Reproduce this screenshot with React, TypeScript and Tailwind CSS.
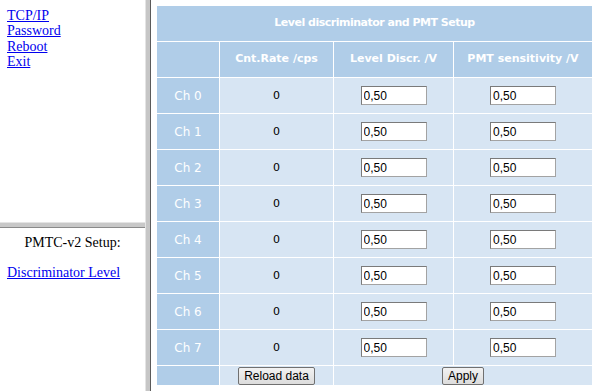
import React from 'react';

const channels = [0, 1, 2, 3, 4, 5, 6, 7];

const serif = { fontFamily: '"Liberation Serif", "Times New Roman", serif' };
const arial = { fontFamily: '"Liberation Sans", Arial, sans-serif' };

const App: React.FC = () => {
  return (
    <div className="flex w-[600px] h-[391px] bg-white overflow-hidden">
      {/* left frames */}
      <div className="flex flex-col w-[145px] shrink-0" style={serif}>
        <div className="h-[222px] pl-[7px] pt-[8px] text-[14px] leading-[15.4px] flex flex-col items-start">
          <a href="#" className="text-[#0000ee] underline">TCP/IP</a>
          <a href="#" className="text-[#0000ee] underline">Password</a>
          <a href="#" className="text-[#0000ee] underline">Reboot</a>
          <a href="#" className="text-[#0000ee] underline">Exit</a>
        </div>
        <div className="h-[6px] border-t border-[#e4e4e4] border-b border-b-[#8a8a8a] bg-[#c8c8c8]"></div>
        <div className="flex-1 pl-[7px] pt-[7px] text-[14px] leading-[15px]">
          <p className="text-center text-black pr-[7px]">PMTC-v2 Setup:</p>
          <p className="mt-[15px]">
            <a href="#" className="text-[#0000ee] underline">Discriminator Level</a>
          </p>
        </div>
      </div>
      <div className="w-[6px] shrink-0 border-l border-[#e4e4e4] border-r border-r-[#5a5a5a] bg-[#c6c6c6]"></div>

      {/* right frame */}
      <div className="flex-1 pl-[5px] pt-[5px]" style={{ fontFamily: '"DejaVu Sans", Verdana, sans-serif' }}>
        <table className="border-separate border-spacing-[1px] w-[437px] table-fixed">
          <colgroup>
            <col className="w-[62px]" />
            <col className="w-[113px]" />
            <col className="w-[119px]" />
            <col className="w-[138px]" />
          </colgroup>
          <thead>
            <tr>
              <th colSpan={4} className="h-[35px] bg-[#b0cde8] text-white text-[11px] tracking-[-0.5px] font-bold text-center p-0">
                Level discriminator and PMT Setup
              </th>
            </tr>
            <tr>
              <th className="h-[35px] bg-[#b0cde8] p-0"></th>
              <th className="bg-[#b0cde8] text-white text-[11px] font-bold p-0">Cnt.Rate /cps</th>
              <th className="bg-[#b0cde8] text-white text-[11px] font-bold p-0">Level Discr. /V</th>
              <th className="bg-[#b0cde8] text-white text-[11px] font-bold p-0">PMT sensitivity /V</th>
            </tr>
          </thead>
          <tbody>
            {channels.map((ch) => (
              <tr key={ch}>
                <td className="h-[35px] bg-[#b0cde8] text-white text-[12px] text-center p-0 align-middle">Ch {ch}</td>
                <td className="bg-[#d7e5f3] text-black text-[11px] leading-[35px] text-center p-0 align-middle">0</td>
                <td className="bg-[#d7e5f3] p-0 align-middle">
                  <div className="flex justify-center">
                    <input
                      defaultValue="0,50"
                      className="w-[66px] h-[19px] bg-white border border-[#a3a3a3] border-t-[#7a7a7a] border-l-[#7a7a7a] px-[2px] text-[12px] text-black outline-none"
                      style={arial}
                    />
                  </div>
                </td>
                <td className="bg-[#d7e5f3] p-0 align-middle">
                  <div className="flex justify-center">
                    <input
                      defaultValue="0,50"
                      className="w-[66px] h-[19px] bg-white border border-[#a3a3a3] border-t-[#7a7a7a] border-l-[#7a7a7a] px-[2px] text-[12px] text-black outline-none"
                      style={arial}
                    />
                  </div>
                </td>
              </tr>
            ))}
            <tr className="h-[19px]">
              <td className="h-[19px] bg-[#b0cde8] p-0 leading-none"></td>
              <td className="bg-[#d7e5f3] p-0 align-middle leading-none">
                <div className="flex justify-center">
                  <button
                    className="h-[18px] px-[5px] text-[12px] leading-none text-black border border-[#707070] rounded-[2px] bg-[linear-gradient(#f2f2f2,#dcdcdc)]"
                    style={arial}
                  >
                    Reload data
                  </button>
                </div>
              </td>
              <td colSpan={2} className="bg-[#d7e5f3] p-0 align-middle leading-none">
                <div className="flex justify-center">
                  <button
                    className="h-[18px] px-[5px] text-[12px] leading-none text-black border border-[#707070] rounded-[2px] bg-[linear-gradient(#f2f2f2,#dcdcdc)]"
                    style={arial}
                  >
                    Apply
                  </button>
                </div>
              </td>
            </tr>
          </tbody>
        </table>
      </div>
    </div>
  );
};

export default App;
